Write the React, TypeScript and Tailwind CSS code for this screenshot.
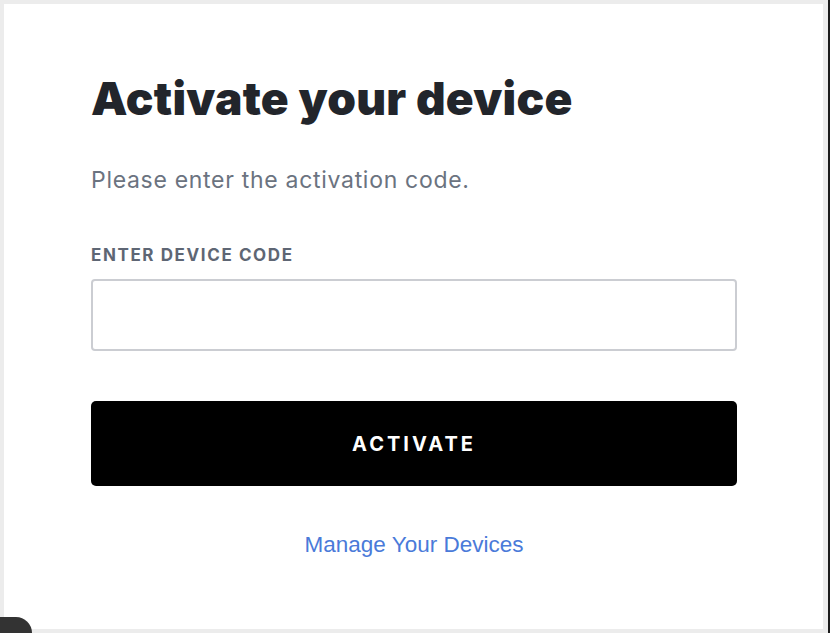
export default function App() {
  return (
    <div className="relative flex h-[633px] w-[830px] bg-[#ececec] p-[4px] pr-[7px] font-['Inter',sans-serif]">
      <div className="flex flex-1 flex-col bg-white pl-[87px] pr-[86px] pt-[66px]">
        <h1 className="text-[46px] font-black leading-[56px] tracking-[0.25px] text-[#22252b]">
          Activate your device
        </h1>
        <p className="mt-[40px] text-[23px] leading-[28px] tracking-[0.7px] text-[#6b7380]">
          Please enter the activation code.
        </p>
        <label className="mt-[51px] text-[17px] font-bold leading-[20px] tracking-[1.6px] text-[#5e6674]">
          ENTER DEVICE CODE
        </label>
        <input
          type="text"
          className="mt-[14px] h-[72px] w-full rounded-[4px] border-2 border-[#cbcdd2] bg-white px-4 text-[20px] outline-none"
        />
        <button className="mt-[50px] h-[85px] w-full rounded-[5px] bg-black text-[20px] font-bold tracking-[3px] text-white">
          ACTIVATE
        </button>
        <a
          href="#"
          className="mt-[45px] self-center font-['Liberation_Sans',sans-serif] text-[22.5px] leading-[28px] text-[#4a7ad9]"
        >
          Manage Your Devices
        </a>
      </div>
      <div className="absolute bottom-0 right-0 top-0 w-[2px] bg-[#1b1b1b]" />
      <div className="absolute bottom-0 left-0 h-[16px] w-[32px] rounded-tr-[16px] bg-[#333333]" />
    </div>
  );
}
